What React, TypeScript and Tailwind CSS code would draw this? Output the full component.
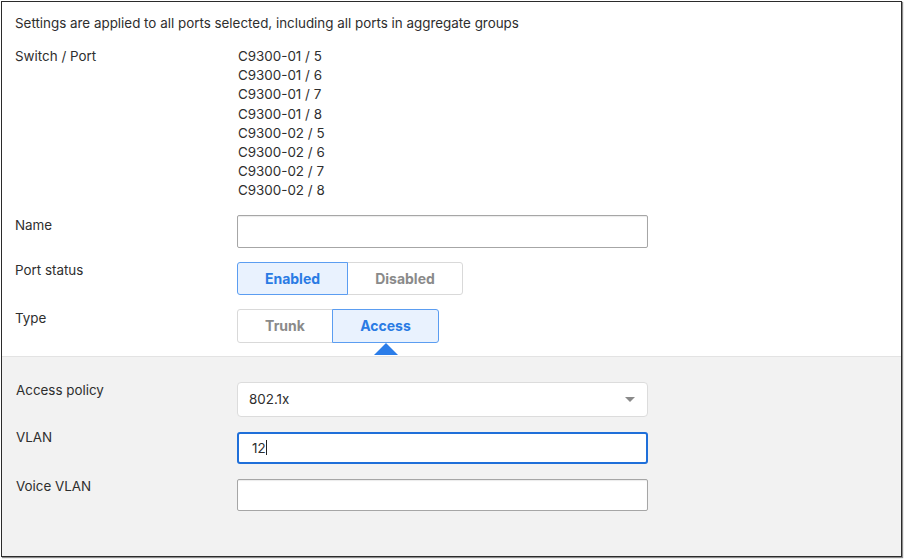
import React from 'react';

const ports = [
  'C9300-01 / 5',
  'C9300-01 / 6',
  'C9300-01 / 7',
  'C9300-01 / 8',
  'C9300-02 / 5',
  'C9300-02 / 6',
  'C9300-02 / 7',
  'C9300-02 / 8',
];

const Row: React.FC<{ label: string; labelPad?: string; children: React.ReactNode }> = ({ label, labelPad = '', children }) => (
  <div className="flex">
    <div className={`w-[222px] shrink-0 leading-[16px] ${labelPad}`}>{label}</div>
    <div className="flex-1">{children}</div>
  </div>
);

const Segment: React.FC<{ label: string; active?: boolean; width: string; pointer?: boolean; first?: boolean }> = ({ label, active, width, pointer, first }) => (
  <div
    className={`relative flex items-center justify-center font-bold text-[14px] ${width} ${first ? 'rounded-l-[3px]' : 'rounded-r-[3px]'} ${
      active ? 'bg-[#e9f2fe] border border-[#5b9df1] text-[#2a7be4] z-10' : 'bg-white border border-[#d9d9d9] text-[#8a8a8a]'
    }`}
  >
    {label}
    {/* pointer marks the active type's settings panel */}
    {pointer && (
      <span className="absolute left-1/2 -translate-x-1/2 top-[100%] mt-[1px] w-0 h-0 border-l-[12px] border-r-[12px] border-b-[12px] border-l-transparent border-r-transparent border-b-[#2b7de9]" />
    )}
  </div>
);

export default function App() {
  return (
    <div className="w-[904px] h-[559px] bg-white" style={{ fontFamily: 'Inter, "Noto Sans", sans-serif' }}>
      <div className="ml-[1px] mt-[1px] w-[901px] h-[556px] border border-[#2b2b2b] shadow-[1px_1px_1px_rgba(0,0,0,0.45)] flex flex-col text-[13.4px] text-[#2e2e2e] overflow-hidden">
        {/* Top section */}
        <div className="px-[13px] pt-[13px] bg-white">
          <div className="leading-[16px]">Settings are applied to all ports selected, including all ports in aggregate groups</div>

          <div className="mt-[16px] flex leading-[19.2px]">
            <div className="w-[223px] shrink-0">Switch / Port</div>
            <div className="flex flex-col">
              {ports.map((p) => (
                <span key={p}>{p}</span>
              ))}
            </div>
          </div>

          <div className="mt-[14px] flex flex-col gap-[14px]">
            <Row label="Name" labelPad="pt-[2px]">
              <div className="w-[411px] h-[33px] border border-[#a6a6a6] rounded-[2px] bg-white shadow-[inset_0_1px_1px_rgba(0,0,0,0.08)]" />
            </Row>
            <Row label="Port status" labelPad="pt-0">
              <div className="flex h-[33px]">
                <Segment label="Enabled" active first width="w-[111px]" />
                <Segment label="Disabled" width="w-[116px] -ml-[1px]" />
              </div>
            </Row>
            <Row label="Type" labelPad="pt-[1px]">
              <div className="flex h-[34px]">
                <Segment label="Trunk" first width="w-[96px]" />
                <Segment label="Access" active pointer width="w-[107px] -ml-[1px]" />
              </div>
            </Row>
          </div>
          <div className="h-[13px]" />
        </div>

        {/* Access settings section */}
        <div className="flex-1 bg-[#f2f2f2] border-t border-[#e3e3e3] pl-[14px] pr-[14px] pt-[25px] flex flex-col gap-[15px]">
          <Row label="Access policy" labelPad="pt-0" >
            <div className="-ml-[1px] w-[411px] h-[35px] bg-white border border-[#dcdcdc] rounded-[4px] flex items-center justify-between pl-[11px] pr-[12px]">
              <span>802.1x</span>
              <span className="w-0 h-0 border-l-[5px] border-r-[5px] border-t-[5px] border-l-transparent border-r-transparent border-t-[#8a8a8a]" />
            </div>
          </Row>
          <Row label="VLAN" labelPad="-mt-[3px]">
            <div className="-ml-[1px] w-[411px] h-[32px] bg-white border-2 border-[#1f6fd9] rounded-[3px] flex items-center pl-[13px]">
              <span>12</span>
              <span className="w-[1px] h-[15px] bg-[#222]" />
            </div>
          </Row>
          <Row label="Voice VLAN" labelPad="-mt-[1px]">
            <div className="-ml-[1px] w-[411px] h-[32px] bg-white border border-[#a6a6a6] rounded-[2px] shadow-[inset_0_1px_1px_rgba(0,0,0,0.08)]" />
          </Row>
        </div>
      </div>
    </div>
  );
}
